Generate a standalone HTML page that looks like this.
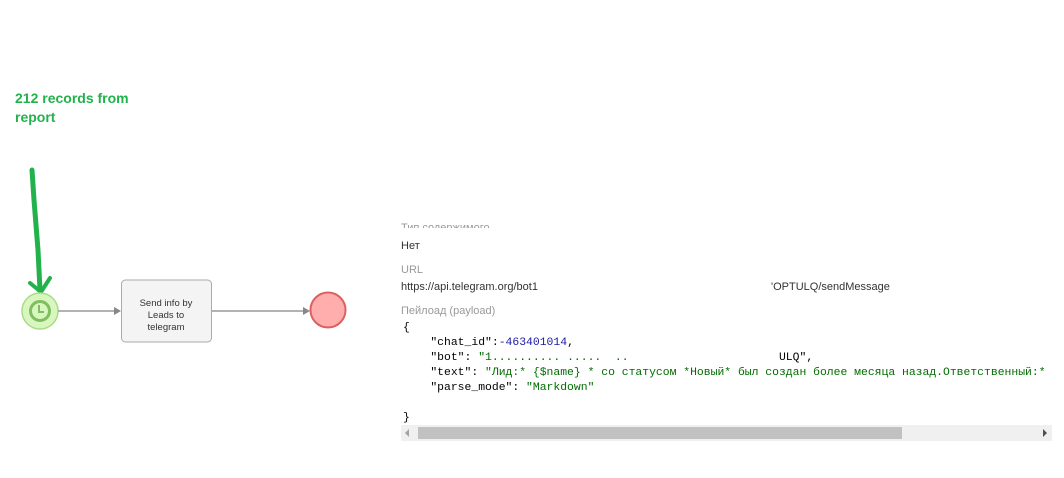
<!DOCTYPE html>
<html><head><meta charset="utf-8"><style>
body{margin:0;width:1064px;height:478px;background:#fff;position:relative;overflow:hidden;font-family:"Liberation Sans","DejaVu Sans",sans-serif}
.a{position:absolute;white-space:pre}
.note{left:15px;top:89px;color:#22b24c;font-weight:bold;font-size:14px;line-height:19px;white-space:normal;width:135px}
.lbl{color:#999;font-size:11px}
.val{color:#333;font-size:11px}
.code{font-family:"Liberation Mono","DejaVu Sans Mono",monospace;font-size:11.4px;line-height:15px;color:#000}
.s{color:#006d00}.n{color:#1a1aa6}
</style></head><body>
<div class="a note">212 records from report</div>
<svg class="a" style="left:0;top:0" width="400" height="478">
<path d="M32 170 L34 200 L38 250 L40 290" stroke="#22b24c" stroke-width="5" fill="none" stroke-linecap="round"/>
<path d="M30 283 L41 292 L50 278" stroke="#22b24c" stroke-width="4" fill="none" stroke-linecap="round"/>
<circle cx="40" cy="311" r="18" fill="#d8f7c0" stroke="#a8dc86" stroke-width="1.5"/>
<circle cx="40" cy="311" r="9.5" fill="none" stroke="#7fbf5e" stroke-width="3"/>
<path d="M39 305 V312 H44" stroke="#7fbf5e" stroke-width="2" fill="none"/>
<line x1="58" y1="311" x2="116" y2="311" stroke="#999" stroke-width="1.5"/>
<path d="M114 307 L121 311 L114 315Z" fill="#888"/>
<rect x="121.5" y="280" width="90" height="62" rx="4" fill="#f4f4f4" stroke="#aaa"/>
<text x="166" y="306" font-size="9.5" text-anchor="middle" fill="#333" font-family="Liberation Sans,sans-serif">Send info by</text>
<text x="166" y="318" font-size="9.5" text-anchor="middle" fill="#333" font-family="Liberation Sans,sans-serif">Leads to</text>
<text x="166" y="330" font-size="9.5" text-anchor="middle" fill="#333" font-family="Liberation Sans,sans-serif">telegram</text>
<line x1="212" y1="311" x2="305" y2="311" stroke="#999" stroke-width="1.5"/>
<path d="M303 307 L310 311 L303 315Z" fill="#888"/>
<circle cx="328" cy="310" r="17.5" fill="#ffadad" stroke="#dd6060" stroke-width="2"/>
</svg>
<div class="a lbl" style="left:401px;height:10px;overflow:hidden;line-height:20px;top:218px">Тип содержимого</div>
<div class="a val" style="left:401px;top:240px">Нет</div>
<div class="a lbl" style="left:401px;top:264px">URL</div>
<div class="a val" style="left:401px;top:281px">https://api.telegram.org/bot1</div>
<div class="a val" style="left:771px;top:281px">'OPTULQ/sendMessage</div>
<div class="a lbl" style="left:401px;top:305px">Пейлоад (payload)</div>
<div class="a code" style="left:403px;top:321px;width:650px;overflow:hidden">{
    "chat_id":<span class="n">-463401014</span>,
    "bot": <span class="s">"1.......... .....  ..</span>                      ULQ",
    "text": <span class="s">"Лид:* {$name} * со статусом *Новый* был создан более месяца назад.Ответственный:*</span>
    "parse_mode": <span class="s">"Markdown"</span>

}</div>
<div class="a" style="left:401px;top:425px;width:651px;height:16px;background:#f0f0f0"></div>
<div class="a" style="left:418px;top:427px;width:484px;height:12px;background:#c1c1c1"></div>
<div class="a" style="left:405px;top:429px;width:0;height:0;border:4px solid transparent;border-right-color:#a3a3a3;border-left:0"></div>
<div class="a" style="left:1043px;top:429px;width:0;height:0;border:4px solid transparent;border-left-color:#505050;border-right:0"></div>
</body></html>
